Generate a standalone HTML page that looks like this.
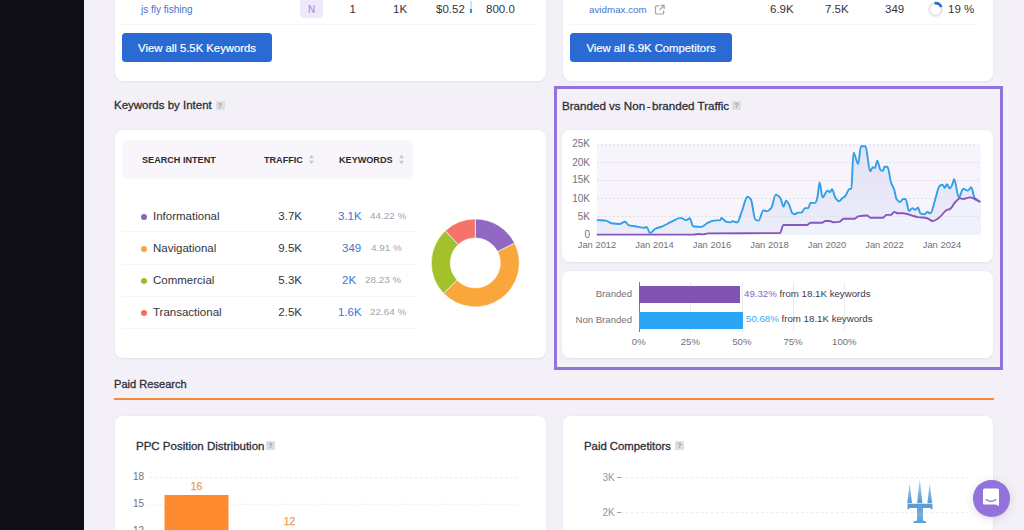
<!DOCTYPE html>
<html><head><meta charset="utf-8">
<style>
*{margin:0;padding:0;box-sizing:border-box}
html,body{width:1024px;height:530px;overflow:hidden;background:#f3f1f7;font-family:"Liberation Sans",sans-serif;color:#222230}
.abs{position:absolute}
.side{left:0;top:0;width:84px;height:530px;background:#0f0e16}
.card{position:absolute;background:#fff;border-radius:7.5px;box-shadow:0 0 0 0.5px rgba(120,110,150,0.06),0 1px 2px rgba(120,110,150,0.08)}
.t{position:absolute;white-space:nowrap;line-height:1}
.btn{position:absolute;background:#2a6bd3;border-radius:3.5px;color:#fff;font-size:11.3px;text-align:center;line-height:30px;height:29px;-webkit-text-stroke:0.2px #fff}
.h{font-size:11.5px;color:#2e2e37;-webkit-text-stroke:0.3px #2e2e37}
.q{position:absolute;width:9px;height:9px;background:#dedde2;border-radius:1px;color:#9a99a2;font-size:7px;line-height:9px;text-align:center;font-weight:bold}
.dots{position:absolute;height:0;border-top:1px dotted #eeecf1}
.num{font-size:11.5px;color:#33333d}
.blue{color:#4275cd}
.gray{color:#a3a2ab}
.axis{font-size:10px;color:#72717b}
</style></head>
<body>
<div class="abs side"></div>

<!-- top left card -->
<div class="card" style="left:115px;top:-10px;width:431px;height:91px"></div>
<div class="t blue" style="left:141px;top:4.5px;font-size:10px">js fly fishing</div>
<div class="abs" style="left:300px;top:-4px;width:23px;height:22px;background:#efe9fb;border-radius:4px;color:#ab8ee0;font-size:10px;text-align:center;line-height:27px;-webkit-text-stroke:0.15px #ab8ee0">N</div>
<div class="t num" style="left:349.5px;top:4px">1</div>
<div class="t num" style="left:393px;top:4px">1K</div>
<div class="t num" style="left:436px;top:4px">$0.52</div>
<div class="abs" style="left:470px;top:1px;width:1.5px;height:12px;background:#cfe3f5"></div>
<div class="abs" style="left:470px;top:9px;width:2px;height:4px;background:#2f8fe0"></div>
<div class="t num" style="left:486px;top:4px">800.0</div>
<div class="dots" style="left:122px;top:24px;width:416px"></div>
<div class="btn" style="left:122px;top:33px;width:150px">View all 5.5K Keywords</div>

<!-- top right card -->
<div class="card" style="left:563px;top:-10px;width:430px;height:90.5px"></div>
<div class="t blue" style="left:589px;top:4.6px;font-size:9.8px">avidmax.com</div>
<svg class="abs" style="left:654px;top:4px" width="12" height="12" viewBox="0 0 12 12"><path d="M5 1.8H2.8a1.3 1.3 0 0 0-1.3 1.3v5.6a1.3 1.3 0 0 0 1.3 1.3h5.6a1.3 1.3 0 0 0 1.3-1.3V6.8M7 1.3h3.2v3.2M10 1.5L5.8 5.7" fill="none" stroke="#a3a2aa" stroke-width="1.2" stroke-linecap="round"/></svg>
<div class="t num" style="left:770px;top:4px">6.9K</div>
<div class="t num" style="left:825px;top:4px">7.5K</div>
<div class="t num" style="left:885px;top:4px">349</div>
<svg class="abs" style="left:927px;top:1px" width="17" height="17" viewBox="0 0 17 17"><circle cx="8.5" cy="8.5" r="6.3" fill="none" stroke="#e9e8ee" stroke-width="2.6"/><path d="M7.6 2.25A6.3 6.3 0 0 1 14.3 6.1" fill="none" stroke="#2c6cd2" stroke-width="2.6"/></svg>
<div class="t num" style="left:948px;top:4px">19&nbsp;%</div>
<div class="dots" style="left:570px;top:24px;width:405px"></div>
<div class="btn" style="left:570px;top:33px;width:162px">View all 6.9K Competitors</div>

<!-- Keywords by intent -->
<div class="t h" style="left:114px;top:100px">Keywords by Intent</div>
<div class="q" style="left:215.5px;top:100.5px">?</div>
<div class="card" style="left:115px;top:130px;width:431px;height:228px"></div>
<div class="abs" style="left:122px;top:140px;width:291px;height:39px;background:#f8f6fa;border-radius:6px"></div>
<div class="t" style="left:142px;top:155.6px;font-size:9.1px;font-weight:bold;color:#2a2a33">SEARCH INTENT</div>
<div class="t" style="left:264px;top:155.6px;font-size:9.1px;font-weight:bold;color:#2a2a33">TRAFFIC</div>
<div class="t" style="left:339px;top:155.6px;font-size:9.1px;font-weight:bold;color:#2a2a33">KEYWORDS</div>
<svg class="abs" style="left:308px;top:154px" width="7" height="11" viewBox="0 0 7 11"><path d="M3.5 1L6 4.2H1z M3.5 10L6 6.8H1z" fill="#c6c5cc"/></svg>
<svg class="abs" style="left:398px;top:154px" width="7" height="11" viewBox="0 0 7 11"><path d="M3.5 1L6 4.2H1z M3.5 10L6 6.8H1z" fill="#c6c5cc"/></svg>

<div class="abs" style="left:141px;top:214px;width:6px;height:6px;border-radius:50%;background:#8e62c2"></div>
<div class="t num" style="left:153px;top:211px">Informational</div>
<div class="t num" style="left:278.3px;top:211px">3.7K</div>
<div class="t blue" style="left:338px;top:211px;font-size:11.5px">3.1K</div>
<div class="t gray" style="left:370px;top:211.3px;font-size:9.9px">44.22 %</div>
<div class="dots" style="left:122px;top:231px;width:295px"></div>

<div class="abs" style="left:141px;top:246px;width:6px;height:6px;border-radius:50%;background:#f7a63c"></div>
<div class="t num" style="left:153px;top:243px">Navigational</div>
<div class="t num" style="left:278.3px;top:243px">9.5K</div>
<div class="t blue" style="left:342px;top:243px;font-size:11.5px">349</div>
<div class="t gray" style="left:371px;top:243.3px;font-size:9.9px">4.91 %</div>
<div class="dots" style="left:122px;top:264px;width:295px"></div>

<div class="abs" style="left:141px;top:278px;width:6px;height:6px;border-radius:50%;background:#9dbf23"></div>
<div class="t num" style="left:153px;top:275px">Commercial</div>
<div class="t num" style="left:278.3px;top:275px">5.3K</div>
<div class="t blue" style="left:342px;top:275px;font-size:11.5px">2K</div>
<div class="t gray" style="left:365px;top:275.3px;font-size:9.9px">28.23 %</div>
<div class="dots" style="left:122px;top:296px;width:295px"></div>

<div class="abs" style="left:141px;top:310px;width:6px;height:6px;border-radius:50%;background:#f26d63"></div>
<div class="t num" style="left:153px;top:307px">Transactional</div>
<div class="t num" style="left:278.3px;top:307px">2.5K</div>
<div class="t blue" style="left:338px;top:307px;font-size:11.5px">1.6K</div>
<div class="t gray" style="left:370px;top:307.3px;font-size:9.9px">22.64 %</div>
<div class="dots" style="left:122px;top:328px;width:295px"></div>

<svg class="abs" style="left:0;top:0" width="1024" height="530"><path d="M475.30 218.90A44 44 0 0 1 514.64 243.20L497.65 251.71A25 25 0 0 0 475.30 237.90Z" fill="#9169c4" stroke="#fff" stroke-width="0.6"/><path d="M514.64 243.20A44 44 0 0 1 443.49 293.30L457.23 280.17A25 25 0 0 0 497.65 251.71Z" fill="#f9a73b" stroke="#fff" stroke-width="0.6"/><path d="M443.49 293.30A44 44 0 0 1 445.35 230.67L458.28 244.59A25 25 0 0 0 457.23 280.17Z" fill="#a3c12a" stroke="#fff" stroke-width="0.6"/><path d="M445.35 230.67A44 44 0 0 1 475.30 218.90L475.30 237.90A25 25 0 0 0 458.28 244.59Z" fill="#f6736b" stroke="#fff" stroke-width="0.6"/></svg>

<!-- Branded box -->
<div class="abs" style="left:554px;top:86px;width:449px;height:284px;border:3px solid #9272dc"></div>
<div class="t h" style="left:562px;top:100px;font-size:11.6px">Branded vs Non<span style="margin:0 1.5px">-</span>branded Traffic</div>
<div class="q" style="left:732px;top:101px">?</div>
<div class="card" style="left:562px;top:130px;width:431px;height:132px"></div>
<div class="card" style="left:562px;top:271px;width:431px;height:87px"></div>
<svg class="abs" style="left:0;top:0" width="1024" height="530">
<defs>
<linearGradient id="gb" x1="0" y1="0" x2="0" y2="1"><stop offset="0" stop-color="#dfdef6"/><stop offset="1" stop-color="#eaecfa"/></linearGradient>
</defs>
<rect x="597" y="144.7" width="384" height="89.9" fill="#f8f4fb"/>
<path d="M596.8,220.1C599.8,220.3 602.9,220.3 605.9,220.6C607.8,220.8 609.6,223.0 611.5,223.3C614.1,223.7 616.8,224.0 619.4,224.0C621.3,224.0 623.2,221.7 625.1,221.7C626.2,221.7 627.4,224.7 628.5,225.1C630.8,225.8 633.0,225.9 635.3,226.3C638.3,226.8 641.4,227.8 644.4,227.8C645.1,227.8 645.9,226.9 646.6,226.9C647.7,226.9 648.9,233.1 650.0,233.1C651.9,233.1 653.8,229.4 655.7,228.5C658.0,227.4 660.2,227.2 662.5,226.3C665.5,225.1 668.5,223.1 671.5,221.7C674.5,220.3 677.6,217.9 680.6,217.9C682.5,217.9 684.4,220.1 686.3,220.1C687.4,220.1 688.6,218.3 689.7,218.3C690.8,218.3 692.0,226.1 693.1,226.3C695.7,226.7 698.4,226.9 701.0,226.9C703.3,226.9 705.5,224.0 707.8,222.9C709.7,222.0 711.5,220.8 713.4,220.6C715.7,220.3 717.9,220.5 720.2,220.1C720.6,220.0 721.0,217.9 721.4,217.9C722.9,217.9 724.4,221.3 725.9,221.7C727.4,222.1 728.9,222.4 730.4,222.4C731.2,222.4 731.9,221.3 732.7,221.3C734.2,221.3 735.7,222.4 737.2,222.4C738.7,222.4 740.3,215.3 741.8,211.5C743.7,206.9 745.5,196.8 747.4,196.8C748.5,196.8 749.7,197.8 750.8,199.1C752.3,200.8 753.8,218.6 755.3,219.5C756.4,220.2 757.6,220.6 758.7,220.6C760.2,220.6 761.8,210.4 763.3,210.4C764.4,210.4 765.6,211.1 766.7,211.1C768.2,211.1 769.7,209.7 771.2,208.1C772.7,206.5 774.2,194.6 775.7,194.6C777.2,194.6 778.8,196.2 780.3,198.0C781.4,199.3 782.4,206.7 783.5,206.7C784.4,206.7 785.2,200.6 786.1,200.6C787.1,200.6 788.1,202.9 789.1,204.7C790.2,206.7 791.3,212.6 792.4,213.3C793.2,213.8 793.9,214.2 794.7,214.2C795.8,214.2 797.0,212.6 798.1,212.6C799.2,212.6 800.4,212.6 801.5,212.6C802.6,212.6 803.8,208.1 804.9,208.1C806.0,208.1 807.2,208.1 808.3,208.1C809.0,208.1 809.8,202.9 810.5,202.9C812.0,202.9 813.6,202.9 815.1,202.9C815.8,202.9 816.6,200.4 817.3,197.9C818.1,195.3 818.8,182.5 819.6,182.5C820.6,182.5 821.5,197.4 822.5,197.4C824.2,197.4 825.8,190.6 827.5,190.6C828.3,190.6 829.0,192.2 829.8,192.2C830.5,192.2 831.3,189.3 832.0,189.3C833.1,189.3 834.3,196.3 835.4,197.9C836.5,199.5 837.7,201.3 838.8,201.3C839.9,201.3 841.1,199.2 842.2,198.3C843.3,197.4 844.5,196.9 845.6,195.6C846.7,194.3 847.9,190.0 849.0,189.3C849.8,188.8 850.5,189.0 851.3,188.4C852.0,187.8 852.8,152.6 853.5,152.6C855.0,152.6 856.6,163.9 858.1,163.9C859.1,163.9 860.0,146.3 861.0,146.3C862.5,146.3 864.0,146.3 865.5,146.3C867.0,146.3 868.6,171.2 870.1,171.2C871.0,171.2 871.9,167.3 872.8,167.3C873.5,167.3 874.3,168.0 875.0,168.0C875.8,168.0 876.5,160.6 877.3,160.6C878.4,160.6 879.6,169.9 880.7,170.3C881.5,170.5 882.2,170.7 883.0,170.7C883.5,170.7 884.0,166.7 884.5,166.7C885.5,166.7 886.5,166.7 887.5,166.7C888.6,166.7 889.8,178.5 890.9,182.0C892.0,185.5 893.2,186.5 894.3,190.0C895.0,192.2 895.8,197.9 896.5,199.0C897.6,200.7 898.8,202.0 899.9,202.0C901.0,202.0 902.2,199.0 903.3,199.0C904.1,199.0 904.8,199.0 905.6,199.0C906.7,199.0 907.9,211.0 909.0,211.0C910.1,211.0 911.3,208.1 912.4,208.1C913.4,208.1 914.3,209.7 915.3,209.7C916.2,209.7 917.1,207.4 918.0,207.4C918.8,207.4 919.5,213.0 920.3,213.3C921.8,213.9 923.3,214.2 924.8,214.2C925.6,214.2 926.3,211.9 927.1,211.9C928.2,211.9 929.4,213.3 930.5,213.3C932.0,213.3 933.5,204.7 935.0,200.2C936.5,195.7 938.0,187.2 939.5,186.1C940.5,185.4 941.5,184.8 942.5,184.8C943.2,184.8 944.0,187.7 944.7,187.7C945.5,187.7 946.2,184.3 947.0,184.3C947.9,184.3 948.8,188.4 949.7,188.4C950.5,188.4 951.2,186.8 952.0,185.4C952.7,184.1 953.5,179.3 954.2,179.3C955.7,179.3 957.3,197.4 958.8,197.4C960.3,197.4 961.8,188.8 963.3,188.8C964.8,188.8 966.3,190.6 967.8,190.6C968.9,190.6 970.1,187.3 971.2,187.3C972.3,187.3 973.5,196.5 974.6,197.9C976.5,200.2 978.4,200.6 980.3,202.0L980.3,234.6L596.8,234.6Z" fill="url(#gb)" opacity="0.85"/>
<path d="M596.8,234.6C629.2,234.6 661.6,234.6 694.0,234.6C695.6,234.6 697.1,234.0 698.7,234.0C700.1,234.0 701.6,234.4 703.0,234.4C704.7,234.4 706.3,233.4 708.0,233.4C732.0,233.0 756.0,233.4 780.0,233.0C781.1,233.0 782.3,225.0 783.4,225.0C791.3,225.0 799.3,225.0 807.2,225.0C808.3,225.0 809.4,222.8 810.5,222.8C814.3,222.8 818.1,222.8 821.9,222.8C823.0,222.8 824.2,221.0 825.3,221.0C826.8,221.0 828.3,221.0 829.8,221.0C830.9,221.0 832.1,222.3 833.2,222.3C835.5,222.3 837.7,222.1 840.0,221.6C841.1,221.4 842.3,218.7 843.4,218.7C847.2,218.7 850.9,218.7 854.7,218.7C855.8,218.7 857.0,216.6 858.1,216.4C861.1,215.8 864.1,215.5 867.1,215.5C868.2,215.5 869.4,217.8 870.5,217.8C874.7,217.8 878.8,217.8 883.0,217.8C884.1,217.8 885.3,214.9 886.4,214.9C887.9,214.9 889.4,214.9 890.9,214.9C892.0,214.9 893.2,211.9 894.3,211.9C895.4,211.9 896.6,213.3 897.7,213.3C899.6,213.3 901.4,213.3 903.3,213.3C906.7,213.3 910.1,215.1 913.5,216.0C915.0,216.4 916.5,216.8 918.0,217.1C921.0,217.6 924.1,217.6 927.1,218.3C929.0,218.7 930.9,221.0 932.8,221.0C934.7,221.0 936.5,219.5 938.4,218.3C941.4,216.4 944.5,210.7 947.5,209.7C948.2,209.5 949.0,209.5 949.7,209.2C951.6,208.5 953.5,203.9 955.4,202.0C956.9,200.5 958.4,198.3 959.9,198.3C961.0,198.3 962.2,199.0 963.3,199.0C965.6,199.0 967.8,197.4 970.1,197.4C971.6,197.4 973.1,198.4 974.6,199.0C976.5,199.8 978.4,201.0 980.3,202.0L980.3,234.6L596.8,234.6Z" fill="#eff2fc"/>
<g stroke="#e2deea" stroke-width="1" stroke-dasharray="2 2">
<line x1="597" y1="144.7" x2="981" y2="144.7"/><line x1="597" y1="162.6" x2="981" y2="162.6"/><line x1="597" y1="180.5" x2="981" y2="180.5"/><line x1="597" y1="198.5" x2="981" y2="198.5"/><line x1="597" y1="216.5" x2="981" y2="216.5"/>
</g>
<path d="M596.8,220.1C599.8,220.3 602.9,220.3 605.9,220.6C607.8,220.8 609.6,223.0 611.5,223.3C614.1,223.7 616.8,224.0 619.4,224.0C621.3,224.0 623.2,221.7 625.1,221.7C626.2,221.7 627.4,224.7 628.5,225.1C630.8,225.8 633.0,225.9 635.3,226.3C638.3,226.8 641.4,227.8 644.4,227.8C645.1,227.8 645.9,226.9 646.6,226.9C647.7,226.9 648.9,233.1 650.0,233.1C651.9,233.1 653.8,229.4 655.7,228.5C658.0,227.4 660.2,227.2 662.5,226.3C665.5,225.1 668.5,223.1 671.5,221.7C674.5,220.3 677.6,217.9 680.6,217.9C682.5,217.9 684.4,220.1 686.3,220.1C687.4,220.1 688.6,218.3 689.7,218.3C690.8,218.3 692.0,226.1 693.1,226.3C695.7,226.7 698.4,226.9 701.0,226.9C703.3,226.9 705.5,224.0 707.8,222.9C709.7,222.0 711.5,220.8 713.4,220.6C715.7,220.3 717.9,220.5 720.2,220.1C720.6,220.0 721.0,217.9 721.4,217.9C722.9,217.9 724.4,221.3 725.9,221.7C727.4,222.1 728.9,222.4 730.4,222.4C731.2,222.4 731.9,221.3 732.7,221.3C734.2,221.3 735.7,222.4 737.2,222.4C738.7,222.4 740.3,215.3 741.8,211.5C743.7,206.9 745.5,196.8 747.4,196.8C748.5,196.8 749.7,197.8 750.8,199.1C752.3,200.8 753.8,218.6 755.3,219.5C756.4,220.2 757.6,220.6 758.7,220.6C760.2,220.6 761.8,210.4 763.3,210.4C764.4,210.4 765.6,211.1 766.7,211.1C768.2,211.1 769.7,209.7 771.2,208.1C772.7,206.5 774.2,194.6 775.7,194.6C777.2,194.6 778.8,196.2 780.3,198.0C781.4,199.3 782.4,206.7 783.5,206.7C784.4,206.7 785.2,200.6 786.1,200.6C787.1,200.6 788.1,202.9 789.1,204.7C790.2,206.7 791.3,212.6 792.4,213.3C793.2,213.8 793.9,214.2 794.7,214.2C795.8,214.2 797.0,212.6 798.1,212.6C799.2,212.6 800.4,212.6 801.5,212.6C802.6,212.6 803.8,208.1 804.9,208.1C806.0,208.1 807.2,208.1 808.3,208.1C809.0,208.1 809.8,202.9 810.5,202.9C812.0,202.9 813.6,202.9 815.1,202.9C815.8,202.9 816.6,200.4 817.3,197.9C818.1,195.3 818.8,182.5 819.6,182.5C820.6,182.5 821.5,197.4 822.5,197.4C824.2,197.4 825.8,190.6 827.5,190.6C828.3,190.6 829.0,192.2 829.8,192.2C830.5,192.2 831.3,189.3 832.0,189.3C833.1,189.3 834.3,196.3 835.4,197.9C836.5,199.5 837.7,201.3 838.8,201.3C839.9,201.3 841.1,199.2 842.2,198.3C843.3,197.4 844.5,196.9 845.6,195.6C846.7,194.3 847.9,190.0 849.0,189.3C849.8,188.8 850.5,189.0 851.3,188.4C852.0,187.8 852.8,152.6 853.5,152.6C855.0,152.6 856.6,163.9 858.1,163.9C859.1,163.9 860.0,146.3 861.0,146.3C862.5,146.3 864.0,146.3 865.5,146.3C867.0,146.3 868.6,171.2 870.1,171.2C871.0,171.2 871.9,167.3 872.8,167.3C873.5,167.3 874.3,168.0 875.0,168.0C875.8,168.0 876.5,160.6 877.3,160.6C878.4,160.6 879.6,169.9 880.7,170.3C881.5,170.5 882.2,170.7 883.0,170.7C883.5,170.7 884.0,166.7 884.5,166.7C885.5,166.7 886.5,166.7 887.5,166.7C888.6,166.7 889.8,178.5 890.9,182.0C892.0,185.5 893.2,186.5 894.3,190.0C895.0,192.2 895.8,197.9 896.5,199.0C897.6,200.7 898.8,202.0 899.9,202.0C901.0,202.0 902.2,199.0 903.3,199.0C904.1,199.0 904.8,199.0 905.6,199.0C906.7,199.0 907.9,211.0 909.0,211.0C910.1,211.0 911.3,208.1 912.4,208.1C913.4,208.1 914.3,209.7 915.3,209.7C916.2,209.7 917.1,207.4 918.0,207.4C918.8,207.4 919.5,213.0 920.3,213.3C921.8,213.9 923.3,214.2 924.8,214.2C925.6,214.2 926.3,211.9 927.1,211.9C928.2,211.9 929.4,213.3 930.5,213.3C932.0,213.3 933.5,204.7 935.0,200.2C936.5,195.7 938.0,187.2 939.5,186.1C940.5,185.4 941.5,184.8 942.5,184.8C943.2,184.8 944.0,187.7 944.7,187.7C945.5,187.7 946.2,184.3 947.0,184.3C947.9,184.3 948.8,188.4 949.7,188.4C950.5,188.4 951.2,186.8 952.0,185.4C952.7,184.1 953.5,179.3 954.2,179.3C955.7,179.3 957.3,197.4 958.8,197.4C960.3,197.4 961.8,188.8 963.3,188.8C964.8,188.8 966.3,190.6 967.8,190.6C968.9,190.6 970.1,187.3 971.2,187.3C972.3,187.3 973.5,196.5 974.6,197.9C976.5,200.2 978.4,200.6 980.3,202.0" fill="none" stroke="#2f9fe6" stroke-width="1.9" stroke-linejoin="round"/>
<path d="M596.8,234.6C629.2,234.6 661.6,234.6 694.0,234.6C695.6,234.6 697.1,234.0 698.7,234.0C700.1,234.0 701.6,234.4 703.0,234.4C704.7,234.4 706.3,233.4 708.0,233.4C732.0,233.0 756.0,233.4 780.0,233.0C781.1,233.0 782.3,225.0 783.4,225.0C791.3,225.0 799.3,225.0 807.2,225.0C808.3,225.0 809.4,222.8 810.5,222.8C814.3,222.8 818.1,222.8 821.9,222.8C823.0,222.8 824.2,221.0 825.3,221.0C826.8,221.0 828.3,221.0 829.8,221.0C830.9,221.0 832.1,222.3 833.2,222.3C835.5,222.3 837.7,222.1 840.0,221.6C841.1,221.4 842.3,218.7 843.4,218.7C847.2,218.7 850.9,218.7 854.7,218.7C855.8,218.7 857.0,216.6 858.1,216.4C861.1,215.8 864.1,215.5 867.1,215.5C868.2,215.5 869.4,217.8 870.5,217.8C874.7,217.8 878.8,217.8 883.0,217.8C884.1,217.8 885.3,214.9 886.4,214.9C887.9,214.9 889.4,214.9 890.9,214.9C892.0,214.9 893.2,211.9 894.3,211.9C895.4,211.9 896.6,213.3 897.7,213.3C899.6,213.3 901.4,213.3 903.3,213.3C906.7,213.3 910.1,215.1 913.5,216.0C915.0,216.4 916.5,216.8 918.0,217.1C921.0,217.6 924.1,217.6 927.1,218.3C929.0,218.7 930.9,221.0 932.8,221.0C934.7,221.0 936.5,219.5 938.4,218.3C941.4,216.4 944.5,210.7 947.5,209.7C948.2,209.5 949.0,209.5 949.7,209.2C951.6,208.5 953.5,203.9 955.4,202.0C956.9,200.5 958.4,198.3 959.9,198.3C961.0,198.3 962.2,199.0 963.3,199.0C965.6,199.0 967.8,197.4 970.1,197.4C971.6,197.4 973.1,198.4 974.6,199.0C976.5,199.8 978.4,201.0 980.3,202.0" fill="none" stroke="#8656bd" stroke-width="1.9" stroke-linejoin="round"/>
</svg>
<div class="t axis" style="right:434px;top:139px">25K</div>
<div class="t axis" style="right:434px;top:157.5px">20K</div>
<div class="t axis" style="right:434px;top:175px">15K</div>
<div class="t axis" style="right:434px;top:194px">10K</div>
<div class="t axis" style="right:434px;top:211.7px">5K</div>
<div class="t axis" style="right:434px;top:229.5px">0</div>
<div class="t axis" style="left:577px;width:40px;text-align:center;top:240.2px;font-size:9.4px">Jan 2012</div>
<div class="t axis" style="left:634.5px;width:40px;text-align:center;top:240.2px;font-size:9.4px">Jan 2014</div>
<div class="t axis" style="left:692px;width:40px;text-align:center;top:240.2px;font-size:9.4px">Jan 2016</div>
<div class="t axis" style="left:749.5px;width:40px;text-align:center;top:240.2px;font-size:9.4px">Jan 2018</div>
<div class="t axis" style="left:807px;width:40px;text-align:center;top:240.2px;font-size:9.4px">Jan 2020</div>
<div class="t axis" style="left:864.5px;width:40px;text-align:center;top:240.2px;font-size:9.4px">Jan 2022</div>
<div class="t axis" style="left:922px;width:40px;text-align:center;top:240.2px;font-size:9.4px">Jan 2024</div>
<!-- bar chart -->
<div class="abs" style="left:690px;top:282px;width:1px;height:50px;background:#eeecf1"></div>
<div class="abs" style="left:741.5px;top:282px;width:1px;height:50px;background:#eeecf1"></div>
<div class="abs" style="left:792.5px;top:282px;width:1px;height:50px;background:#eeecf1"></div>
<div class="abs" style="left:844px;top:282px;width:1px;height:50px;background:#eeecf1"></div>
<div class="abs" style="left:638.5px;top:282px;width:1px;height:50px;background:#7b7a85"></div>
<div class="abs" style="left:639px;top:286.3px;width:101px;height:17px;background:#8153b3"></div>
<div class="abs" style="left:639px;top:311.6px;width:104px;height:17px;background:#2ba5f5"></div>
<div class="t axis" style="right:392px;top:289px;font-size:9.6px">Branded</div>
<div class="t axis" style="right:392px;top:314.5px;font-size:9.6px">Non Branded</div>
<div class="t" style="left:744px;top:288.5px;font-size:9.7px;color:#3a3a44"><span style="color:#8d5fc4">49.32%</span> from 18.1K keywords</div>
<div class="t" style="left:746px;top:314px;font-size:9.7px;color:#3a3a44"><span style="color:#3aa9ef">50.68%</span> from 18.1K keywords</div>
<div class="t axis" style="left:618.8px;width:40px;text-align:center;top:337.3px;font-size:9.6px">0%</div>
<div class="t axis" style="left:670.4px;width:40px;text-align:center;top:337.3px;font-size:9.6px">25%</div>
<div class="t axis" style="left:721.9px;width:40px;text-align:center;top:337.3px;font-size:9.6px">50%</div>
<div class="t axis" style="left:773px;width:40px;text-align:center;top:337.3px;font-size:9.6px">75%</div>
<div class="t axis" style="left:824.4px;width:40px;text-align:center;top:337.3px;font-size:9.6px">100%</div>


<!-- Paid research -->
<div class="t h" style="left:114px;top:378.6px;font-size:11.1px">Paid Research</div>
<div class="abs" style="left:114px;top:398px;width:880px;height:2px;background:#f7893a"></div>
<div class="card" style="left:115px;top:416px;width:431px;height:130px"></div>
<div class="t h" style="left:136px;top:441px">PPC Position Distribution</div>
<div class="q" style="left:266px;top:441px">?</div>
<div class="card" style="left:563px;top:416px;width:430px;height:130px"></div>
<div class="t h" style="left:584px;top:441px;font-size:11.35px">Paid Competitors</div>
<div class="q" style="left:675px;top:441px">?</div>

<div class="t axis" style="right:880px;top:471.5px">18</div>
<div class="t axis" style="right:880px;top:499.4px">15</div>
<div class="t axis" style="right:880px;top:526.3px">12</div>
<svg class="abs" style="left:0;top:0" width="1024" height="530">
<g stroke="#ebe9ef" stroke-width="1" stroke-dasharray="2.5 2.5">
<line x1="150" y1="477.5" x2="520" y2="477.5"/><line x1="150" y1="504.2" x2="520" y2="504.2"/>
<line x1="621" y1="477.5" x2="968" y2="477.5"/><line x1="621" y1="512.6" x2="968" y2="512.6"/>
</g>
<rect x="164.5" y="495" width="64" height="40" fill="#fe8a30"/>
<defs><linearGradient id="tg" gradientUnits="userSpaceOnUse" x1="0" y1="478" x2="0" y2="523"><stop offset="0" stop-color="#c4ddf3"/><stop offset="0.5" stop-color="#5f9fda"/><stop offset="0.62" stop-color="#5b9ad6"/><stop offset="0.8" stop-color="#78b0e2"/><stop offset="1" stop-color="#5d9bd6"/></linearGradient></defs><g fill="url(#tg)"><path d="M907.5 503.5 L932.5 503.5 L932.5 510 L930 508 L923 508 L923 520.5 L926 521.5 L926 523 L913.5 523 L913.5 521.5 L917 520.5 L917 508 L910 508 L907.5 510 Z"/>
<path d="M907.2 503.5 L909.6 483.4 L912.1 503.5 Z"/><path d="M917 503.5 L919.75 478.5 L922.5 503.5 Z"/><path d="M927.3 503.5 L929.75 483.4 L932.2 503.5 Z"/></g><line x1="907" y1="503.6" x2="933" y2="503.6" stroke="#fff" stroke-width="0.7" opacity="0.8"/>
</svg>
<div class="t" style="left:176.6px;width:40px;text-align:center;top:481.6px;font-size:10.3px;color:#f19a52;-webkit-text-stroke:0.25px #f19a52">16</div>
<div class="t" style="left:269.5px;width:40px;text-align:center;top:517.4px;font-size:10.3px;color:#f19a52;-webkit-text-stroke:0.25px #f19a52">12</div>
<div class="t axis" style="left:602.5px;top:472.6px;color:#96959e">3K</div><div class="abs" style="left:617px;top:477px;width:3.5px;height:1.1px;background:#9e9da5"></div>
<div class="t axis" style="left:602.5px;top:508px;color:#96959e">2K</div><div class="abs" style="left:617px;top:512.1px;width:3.5px;height:1.1px;background:#9e9da5"></div>
<div class="abs" style="left:973px;top:480px;width:36.5px;height:36.5px;border-radius:50%;background:#9372dc;box-shadow:0 2px 8px rgba(80,60,120,0.18)"></div>
<svg class="abs" style="left:982px;top:488.4px" width="18" height="19" viewBox="0 0 18 19"><path d="M2.5 0.5H15.5A1.5 1.5 0 0 1 17 2V18L13.5 16.5H2.5A1.5 1.5 0 0 1 1 15V2A1.5 1.5 0 0 1 2.5 0.5Z" fill="#fff"/><path d="M4 11.6Q9 15.2 14 11.6" fill="none" stroke="#9372dc" stroke-width="1.2" stroke-linecap="round"/></svg>

</body></html>
